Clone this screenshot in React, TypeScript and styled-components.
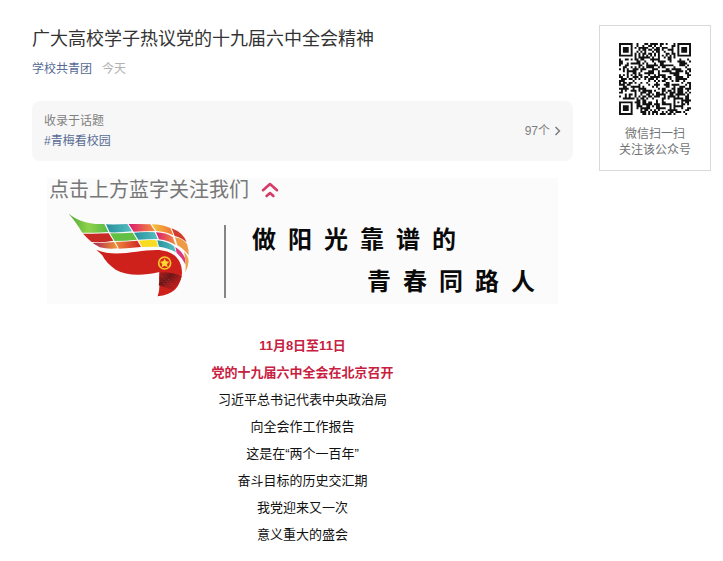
import React from "react";
import styled, { createGlobalStyle } from "styled-components";

const GlobalStyle = createGlobalStyle`
  * { box-sizing: border-box; }
  body {
    margin: 0;
    background: #fff;
    font-family: "Liberation Sans", "Noto Sans CJK SC", sans-serif;
  }
`;

const Page = styled.div`
  display: flex;
  align-items: flex-start;
  gap: 26px;
  padding: 25px 12px 12px 32px;
`;

const Article = styled.main`
  flex: 1;
  min-width: 0;
`;

const Title = styled.h1`
  margin: 0;
  font-size: 18px;
  line-height: 28px;
  font-weight: 400;
  color: #333;
`;

const Meta = styled.div`
  display: flex;
  gap: 10px;
  margin-top: 6px;
  font-size: 12px;
  line-height: 20px;
`;

const TextLink = styled.a`
  color: #576b95;
  text-decoration: none;
`;

const PublishTime = styled.time`
  color: #b2b2b2;
`;

const TopicCard = styled.section`
  display: flex;
  align-items: center;
  justify-content: space-between;
  margin-top: 22px;
  padding: 10px 12px;
  border-radius: 8px;
  background: #f7f7f7;
  font-size: 12px;
  line-height: 20px;
`;

const TopicLabel = styled.div`
  color: #808080;
`;

const TopicCount = styled.a`
  display: flex;
  align-items: center;
  gap: 4px;
  color: #808080;
  text-decoration: none;
`;

const Banner = styled.section`
  margin: 17px 15px 0;
  background: #fbfbfb;
`;

const BannerHint = styled.div`
  display: flex;
  align-items: center;
  gap: 12px;
  padding-left: 2px;
  font-size: 20px;
  line-height: 24px;
  font-weight: 400;
  color: #777;
`;

const BannerBody = styled.div`
  display: flex;
  align-items: flex-end;
  height: 102px;
  padding-left: 20px;
`;

const LogoBox = styled.div`
  margin-bottom: 5px;
  svg { display: block; }
`;

const Divider = styled.div`
  width: 2px;
  height: 73px;
  margin: 0 26px 6px 34px;
  background: #858585;
`;

const Slogan = styled.div`
  padding-bottom: 1px;
`;

const SloganLine = styled.div<{ $indent?: boolean }>`
  display: flex;
  gap: 12px;
  padding-left: ${(p) => (p.$indent ? "115px" : "0")};
  font-size: 24px;
  line-height: 42px;
  font-weight: 700;
  color: #0a0a0a;
`;

const Body = styled.section`
  margin-top: 28px;
  text-align: center;
`;

const Line = styled.p<{ $strong?: boolean }>`
  margin: 0;
  font-size: 13px;
  line-height: 27px;
  font-weight: ${(p) => (p.$strong ? 700 : 400)};
  color: ${(p) => (p.$strong ? "#c8203f" : "#111")};
`;

const QrCard = styled.aside`
  display: flex;
  flex-direction: column;
  align-items: center;
  flex: none;
  width: 112px;
  padding: 17px 0 12px;
  border: 1px solid #d9d9d9;
  background: #fff;
`;

const QrCaption = styled.p`
  margin: 11px 0 0;
  font-size: 12px;
  line-height: 16px;
  text-align: center;
  color: #717375;
`;

const QR_SIZE = 37;

function finder(x: number, y: number, ox: number, oy: number): boolean | null {
  const dx = x - ox;
  const dy = y - oy;
  if (dx < -1 || dy < -1 || dx > 7 || dy > 7) return null;
  const ring = Math.max(Math.abs(dx - 3), Math.abs(dy - 3));
  return ring === 3 || ring <= 1;
}

function isDark(x: number, y: number): boolean {
  const corners = [
    [0, 0],
    [QR_SIZE - 7, 0],
    [0, QR_SIZE - 7],
  ];
  for (const [ox, oy] of corners) {
    const f = finder(x, y, ox, oy);
    if (f !== null) return f;
  }
  const ring = Math.max(Math.abs(x - 30), Math.abs(y - 30));
  if (ring <= 2) return ring !== 1;
  if (y === 6) return x % 2 === 0;
  if (x === 6) return y % 2 === 0;
  let h = (x * 374761393 + y * 668265263) | 0;
  h = Math.imul(h ^ (h >>> 13), 1274126177);
  return ((h ^ (h >>> 16)) & 255) < 134;
}

const qrPath = Array.from({ length: QR_SIZE * QR_SIZE }, (_, i) => [i % QR_SIZE, Math.floor(i / QR_SIZE)])
  .filter(([x, y]) => isDark(x, y))
  .map(([x, y]) => `M${x} ${y}h1v1h-1z`)
  .join("");

function QrCode() {
  return (
    <svg width="72" height="72" viewBox={`0 0 ${QR_SIZE} ${QR_SIZE}`} role="img" aria-label="二维码">
      <path d={qrPath} fill="#111" />
    </svg>
  );
}

function FlagLogo() {
  return (
    <svg width="123" height="87" viewBox="80 125 369 261" aria-hidden="true">
      <defs>
        <linearGradient id="green"><stop offset="0" stopColor="#4fa83a" /><stop offset=".5" stopColor="#8ed24a" /><stop offset="1" stopColor="#55b848" /></linearGradient>
        <linearGradient id="teal"><stop offset="0" stopColor="#278f9c" /><stop offset="1" stopColor="#55c0c2" /></linearGradient>
        <linearGradient id="pink"><stop offset="0" stopColor="#d91a72" /><stop offset="1" stopColor="#f5913a" /></linearGradient>
        <linearGradient id="amber"><stop offset="0" stopColor="#f6c63c" /><stop offset="1" stopColor="#ed7136" /></linearGradient>
        <linearGradient id="plum"><stop offset="0" stopColor="#a82358" /><stop offset="1" stopColor="#f39a35" /></linearGradient>
        <linearGradient id="rust"><stop offset="0" stopColor="#ef8a3c" /><stop offset="1" stopColor="#cf2323" /></linearGradient>
        <linearGradient id="fold" x1="0" y1="0" x2="1" y2="1"><stop offset="0" stopColor="#b51d1b" /><stop offset=".35" stopColor="#6c1718" /><stop offset=".6" stopColor="#a51c1c" /><stop offset="1" stopColor="#d8201f" /></linearGradient>
      </defs>
      <path fill="url(#green)" d="M85 130C108 147 138 163 192 161L204 185C178 188 150 187 126 187C112 164 100 146 85 130Z" />
      <path fill="url(#teal)" d="M197 162Q230 163 261 161L275 183Q240 187 208 186Z" />
      <path fill="url(#pink)" d="M265 161Q300 160 330 162L344 182Q310 182 280 184Z" />
      <path fill="url(#amber)" d="M334 162Q368 163 390 173L399 195Q374 183 348 182Z" />
      <path fill="#c82a24" d="M128 190Q170 191 205 189L219 211Q184 218 154 215Q143 206 128 190Z" />
      <path fill="#62c044" d="M209 189Q244 189 277 187L290 208Q256 212 223 212Z" />
      <path fill="url(#teal)" d="M281 187Q315 184 343 186L352 206Q322 206 294 208Z" />
      <path fill="url(#pink)" d="M347 186Q378 187 397 200L406 224Q384 211 356 207Z" />
      <path fill="url(#plum)" d="M157 218Q190 218 221 215L232 234Q202 237 178 231Z" />
      <path fill="url(#rust)" d="M225 215Q258 213 291 211L302 230Q268 233 236 235Z" />
      <path fill="#f7dc22" d="M295 211Q323 208 348 210L353 229Q330 229 305 230Z" />
      <path fill="url(#teal)" d="M351 210Q382 213 401 228L407 246Q383 232 356 229Z" />
      <path fill="#d43b2b" d="M394 174Q429 187 439 216Q424 202 403 197Z" />
      <path fill="#ef9b45" d="M404 201Q430 206 440 221Q446 239 445 255Q429 234 411 225Z" />
      <path fill="#dc397e" d="M405 230Q426 243 434 264L436 283Q425 262 409 248Z" />
      <path fill="#eda34b" d="M431 244Q444 257 445 273Q443 292 435 306Q438 278 431 244Z" />
      <path fill="#cf211b" d="M168 238C225 263 290 239 348 239C398 239 425 266 425 307Q424 334 405 357Q386 375 352 378Q360 356 356 325L357 305C303 318 257 315 226 298Q197 278 186 255Q177 246 168 238Z" />
      <path fill="url(#fold)" d="M358 306Q391 303 424 318Q416 343 398 361Q375 351 355 345Q360 327 358 306Z" />
      <path fill="none" stroke="#d86761" strokeWidth="2" strokeDasharray="2 5" d="M365 317L390 348M375 316L398 345M367 333L381 350" />
      <circle cx="373" cy="278" r="18" fill="#d8261c" stroke="#f7c92c" strokeWidth="5" />
      <path fill="#fbd832" d="M373 264l4 9 10 1-7 7 2 10-9-5-9 5 2-10-7-7 10-1z" />
    </svg>
  );
}

function DoubleChevronUp() {
  return (
    <svg width="18" height="16" viewBox="0 0 18 16" fill="none" stroke="#d63c67" strokeLinecap="round" strokeLinejoin="round" aria-hidden="true">
      <path strokeWidth="2.6" d="M2 8.2L9 2L16 8.2" />
      <path strokeWidth="2.6" d="M5.6 14L9 11L12.4 14" />
    </svg>
  );
}

const lines = [
  { text: "11月8日至11日", strong: true },
  { text: "党的十九届六中全会在北京召开", strong: true },
  { text: "习近平总书记代表中央政治局" },
  { text: "向全会作工作报告" },
  { text: "这是在“两个一百年”" },
  { text: "奋斗目标的历史交汇期" },
  { text: "我党迎来又一次" },
  { text: "意义重大的盛会" },
];

function SpacedText({ text, indent }: { text: string; indent?: boolean }) {
  return (
    <SloganLine $indent={indent}>
      {[...text].map((c) => (
        <span key={c}>{c}</span>
      ))}
    </SloganLine>
  );
}

export default function App() {
  return (
    <>
      <GlobalStyle />
      <Page lang="zh-CN">
        <Article>
          <Title>广大高校学子热议党的十九届六中全会精神</Title>
          <Meta>
            <TextLink href="#account">学校共青团</TextLink>
            <PublishTime>今天</PublishTime>
          </Meta>
          <TopicCard>
            <div>
              <TopicLabel>收录于话题</TopicLabel>
              <TextLink href="#topic">#青梅看校园</TextLink>
            </div>
            <TopicCount href="#topic-list">
              97个
              <svg width="7" height="10" viewBox="0 0 7 10" fill="none" stroke="#777" strokeWidth="1.4" aria-hidden="true">
                <path d="M1.5 1L5.5 5L1.5 9" />
              </svg>
            </TopicCount>
          </TopicCard>
          <Banner>
            <BannerHint>
              <span>点击上方蓝字关注我们</span>
              <DoubleChevronUp />
            </BannerHint>
            <BannerBody>
              <LogoBox>
                <FlagLogo />
              </LogoBox>
              <Divider />
              <Slogan>
                <SpacedText text="做阳光靠谱的" />
                <SpacedText text="青春同路人" indent />
              </Slogan>
            </BannerBody>
          </Banner>
          <Body>
            {lines.map((l) => (
              <Line key={l.text} $strong={l.strong}>
                {l.text}
              </Line>
            ))}
          </Body>
        </Article>
        <QrCard>
          <QrCode />
          <QrCaption>
            微信扫一扫
            <br />
            关注该公众号
          </QrCaption>
        </QrCard>
      </Page>
    </>
  );
}
